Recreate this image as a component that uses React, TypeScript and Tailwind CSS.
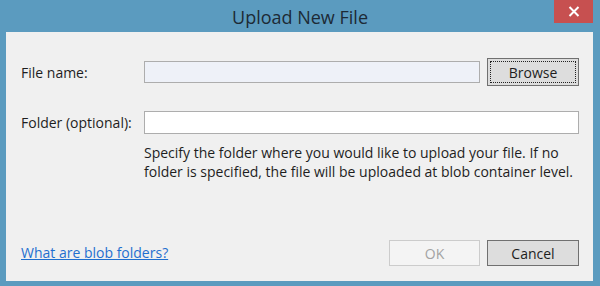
import React from 'react';

const App: React.FC = () => {
  return (
    <div
      className="w-[600px] h-[286px] bg-[#5b9bbf] flex flex-col overflow-hidden"
      style={{ fontFamily: '"Open Sans", "Noto Sans", sans-serif' }}
    >
      {/* Title bar */}
      <div className="relative h-[32px] flex items-center justify-center">
        <span className="text-[18px] text-[#1d2a35] leading-none pt-[2px]">Upload New File</span>
        <button className="absolute top-0 right-[7px] w-[39px] h-[23px] bg-[#c75050] flex items-center justify-center">
          <svg width="12" height="11" viewBox="0 0 12 11">
            <path d="M1.5 1 L10.5 10 M10.5 1 L1.5 10" stroke="#ffffff" strokeWidth="2" />
          </svg>
        </button>
      </div>

      {/* Body */}
      <div className="ml-[6px] mr-[7px] h-[249px] bg-[#f0f0f0] flex flex-col pl-[15px] pr-[14px] pt-[26px] pb-[15px] text-[14px] text-[#1e1e1e]">
        <div className="flex items-center h-[28px]">
          <span className="w-[123px]">File name:</span>
          <div className="w-[336px] h-[22px] bg-[#eef1f8] border border-[#adadad]" />
          <button className="ml-[7px] w-[92px] h-[28px] bg-[#dddddd] border border-[#707070] p-[2px]">
            <div className="w-full h-full border border-dotted border-[#222] flex items-center justify-center">
              Browse
            </div>
          </button>
        </div>

        <div className="flex items-center h-[23px] mt-[25px]">
          <span className="w-[123px]">Folder (optional):</span>
          <div className="flex-1 h-[23px] bg-white border border-[#adadad]" />
        </div>

        <p className="ml-[123px] mt-[9px] leading-[19px]">
          Specify the folder where you would like to upload your file. If no
          <br />
          folder is specified, the file will be uploaded at blob container level.
        </p>

        <div className="mt-auto flex items-center h-[26px]">
          <a href="#" className="text-[#1f6fcf] underline -mt-[2px]">What are blob folders?</a>
          <div className="ml-auto flex gap-[7px]">
            <button className="w-[91px] h-[26px] border border-[#cccccc] bg-[#f4f4f4] text-[#a3a3a3]">OK</button>
            <button className="w-[92px] h-[26px] border border-[#707070] bg-[#dddddd]">Cancel</button>
          </div>
        </div>
      </div>
    </div>
  );
};

export default App;
